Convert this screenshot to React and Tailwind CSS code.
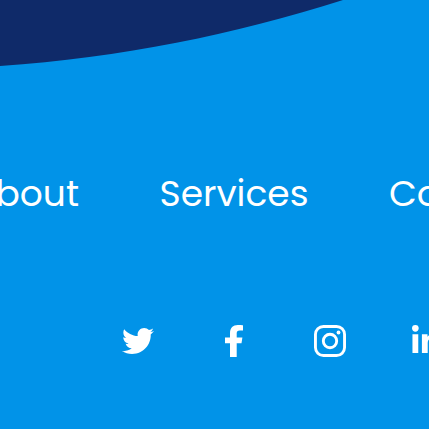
const links = [
  { label: 'About', box: 'w-[79px] justify-end' },
  { label: 'Services', box: 'w-[148px] justify-center' },
  { label: 'Contact', box: '' },
];

function Twitter() {
  return (
    <svg viewBox="0 48 512 416" className="h-[26px] w-8" fill="currentColor" aria-hidden="true">
      <path d="M459.37 151.716c.325 4.548.325 9.097.325 13.645 0 138.72-105.583 298.558-298.558 298.558-59.452 0-114.68-17.219-161.137-47.106 8.447.974 16.568 1.299 25.34 1.299 49.055 0 94.213-16.568 130.274-44.832-46.132-.975-84.792-31.188-98.112-72.772 6.498.974 12.995 1.624 19.818 1.624 9.421 0 18.843-1.3 27.614-3.573-48.081-9.747-84.143-51.98-84.143-102.985v-1.299c13.969 7.797 30.214 12.67 47.431 13.319-28.264-18.843-46.781-51.005-46.781-87.391 0-19.492 5.197-37.36 14.294-52.954 51.655 63.675 129.3 105.258 216.365 109.807-1.624-7.797-2.599-15.918-2.599-24.04 0-57.828 46.782-104.934 104.934-104.934 30.213 0 57.502 12.67 76.67 33.137 23.715-4.548 46.456-13.32 66.599-25.34-7.798 24.366-24.366 44.833-46.132 57.827 21.117-2.273 41.584-8.122 60.426-16.243-14.292 20.791-32.161 39.308-52.628 54.253z" />
    </svg>
  );
}

function Facebook() {
  return (
    <svg viewBox="0 0 18 32" className="h-8 w-[18px]" fill="currentColor" aria-hidden="true">
      <path d="M5 32V18.2H0v-5.7h5V8.2C5 2.9 8 0 12.8 0 15 0 17.2.2 18 .3v5.1h-3.1c-2.5 0-3.2 1.2-3.2 2.9v4.2h5.7l-.9 5.7h-4.8V32z" />
    </svg>
  );
}

function Instagram() {
  return (
    <svg viewBox="0 0 32 32" className="size-8" fill="none" stroke="currentColor" strokeWidth="2.9" aria-hidden="true">
      <rect x="1.45" y="1.45" width="29.1" height="29.1" rx="8" />
      <circle cx="16" cy="16" r="6.7" />
      <circle cx="24.5" cy="7.5" r="1.9" fill="currentColor" stroke="none" />
    </svg>
  );
}

function LinkedIn() {
  return (
    <svg viewBox="0 0 448 448" className="size-7" fill="currentColor" aria-hidden="true">
      <path d="M100.28 448H7.4V148.9h92.88zM53.79 108.1C24.09 108.1 0 83.5 0 53.8a53.79 53.79 0 0 1 107.58 0c0 29.7-24.1 54.3-53.79 54.3zM447.9 448h-92.68V302.4c0-34.7-.7-79.2-48.29-79.2-48.29 0-55.69 37.7-55.69 76.7V448h-92.78V148.9h89.08v40.8h1.3c12.4-23.5 42.69-48.3 87.88-48.3 94 0 111.28 61.9 111.28 142.3V448z" />
    </svg>
  );
}

const socials = [
  { label: 'Twitter', Icon: Twitter, box: 'items-center' },
  { label: 'Facebook', Icon: Facebook, box: 'items-center' },
  { label: 'Instagram', Icon: Instagram, box: 'items-center' },
  { label: 'LinkedIn', Icon: LinkedIn, box: 'items-start' },
];

export default function App() {
  return (
    <footer className="min-h-screen w-full overflow-hidden bg-[#0193e8] font-['Poppins','Inter',sans-serif] text-white">
      <svg viewBox="0 0 429 66" className="block w-full text-[#0f2a69]" fill="currentColor" aria-hidden="true">
        <path d="M0 0H343C236 34 120 58 0 66Z" />
      </svg>
      <nav aria-label="Footer" className="mt-[101px] flex gap-[81px] text-4xl leading-[54px]">
        {links.map(({ label, box }) => (
          <a key={label} href={'#' + label.toLowerCase()} className={'flex shrink-0 whitespace-nowrap ' + box}>
            {label}
          </a>
        ))}
      </nav>
      <div className="mt-[104px] flex gap-16 pl-[122px]">
        {socials.map(({ label, Icon, box }) => (
          <a key={label} href={'#' + label.toLowerCase()} aria-label={label} className={'flex size-8 shrink-0 justify-center ' + box}>
            <Icon />
          </a>
        ))}
      </div>
    </footer>
  );
}
